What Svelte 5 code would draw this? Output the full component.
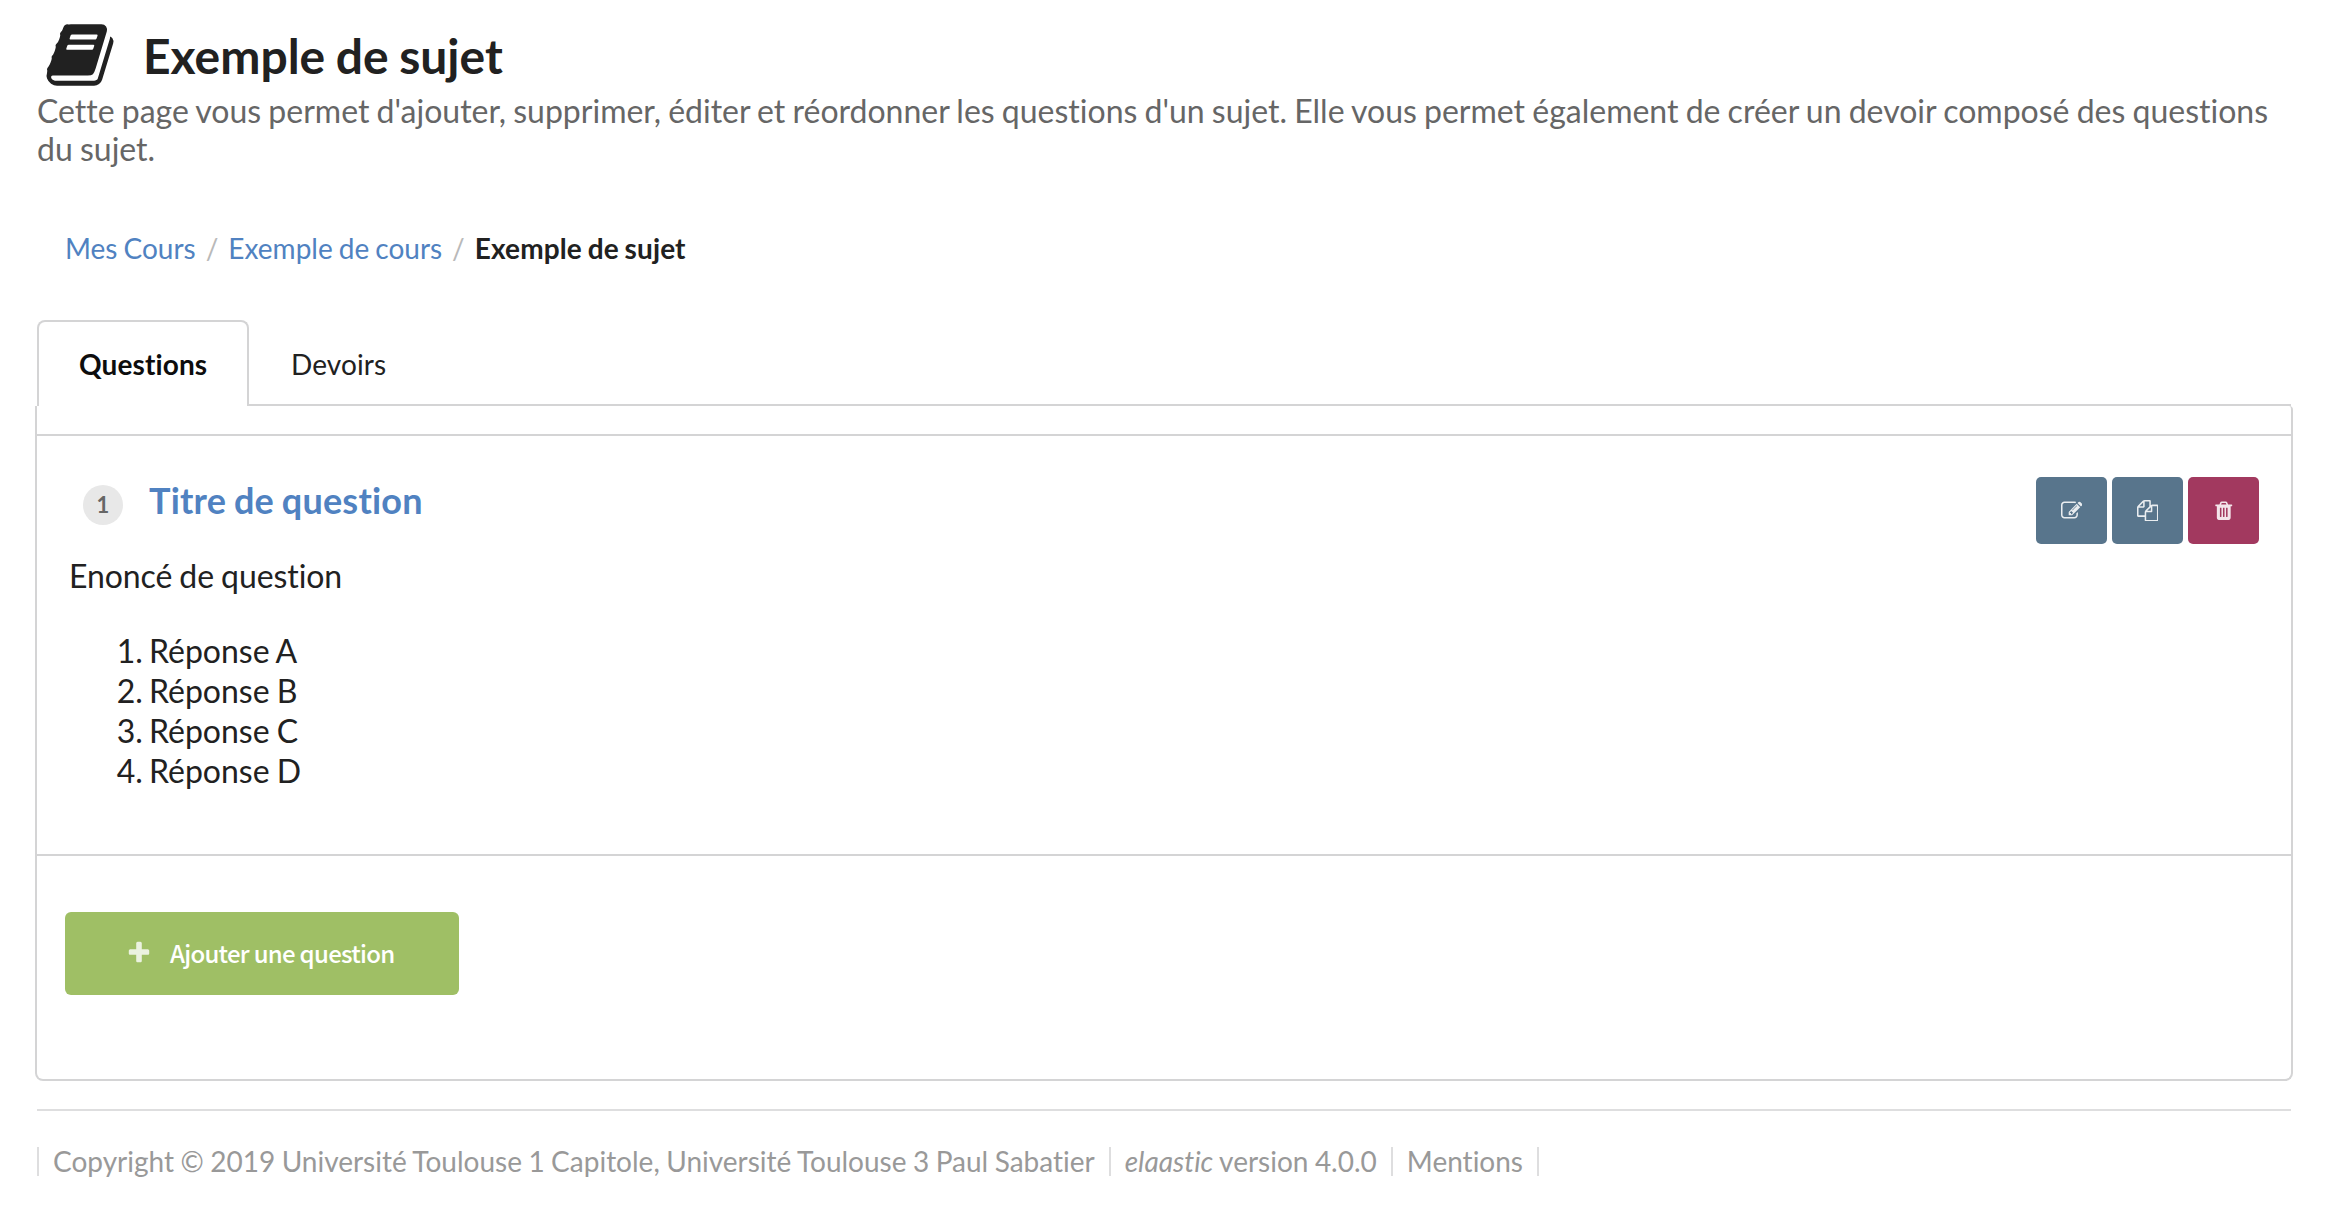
<script>
  const icons = {
    book: 'M1703 478q40 57 18 129l-275 906q-19 64-76.5 107.5t-122.5 43.5h-923q-77 0-148.5-53.5t-99.5-131.5q-24-67-2-127 0-4 3-27t4-37q1-8-3-21.5t-3-19.5q2-11 8-21t16.5-23.5 16.5-23.5q23-38 45-91.5t30-91.5q3-10 .5-30t-.5-28q3-11 17-28t17-23q21-36 42-92t25-90q1-9-2.5-32t.5-28q4-13 22-30.5t22-22.5q19-26 42.5-84.5t27.5-96.5q1-8-3-25.5t-2-26.5q2-8 9-18t18-23 17-21q8-12 16.5-30.5t15-35 16-36 19.5-32 26.5-23.5 36-11.5 47.5 5.5l-1 3q38-9 51-9h761q74 0 114 56t18 130l-274 906q-36 119-71.5 153.5t-128.5 34.5h-869q-27 0-38 15-11 16-1 43 24 70 144 70h923q29 0 56-15.5t35-41.5l300-987q7-22 5-57 38 15 59 43zm-1064 2q-4 13 2 22.5t20 9.5h608q13 0 25.5-9.5t16.5-22.5l21-64q4-13-2-22.5t-20-9.5h-608q-13 0-25.5 9.5t-16.5 22.5zm-83 256q-4 13 2 22.5t20 9.5h608q13 0 25.5-9.5t16.5-22.5l21-64q4-13-2-22.5t-20-9.5h-608q-13 0-25.5 9.5t-16.5 22.5z',
    edit: 'M888 1184l116-116-152-152-116 116v56h96v96h56zm440-720q-16-16-33 1l-350 350q-17 17-1 33t33-1l350-350q17-17 1-33zm80 594v190q0 119-84.5 203.5t-203.5 84.5h-832q-119 0-203.5-84.5t-84.5-203.5v-832q0-119 84.5-203.5t203.5-84.5h832q63 0 117 25 15 7 18 23 3 17-9 29l-49 49q-14 14-32 8-23-6-45-6h-832q-66 0-113 47t-47 113v832q0 66 47 113t113 47h832q66 0 113-47t47-113v-126q0-13 9-22l64-64q15-15 35-7t20 29zm-96-738l288 288-672 672h-288v-288zm444 132l-92 92-288-288 92-92q28-28 68-28t68 28l152 152q28 28 28 68t-28 68z',
    copy: 'M1696 384q40 0 68 28t28 68v1216q0 40-28 68t-68 28h-960q-40 0-68-28t-28-68v-288h-544q-40 0-68-28t-28-68v-672q0-40 20-88t48-76l408-408q28-28 76-48t88-20h416q40 0 68 28t28 68v328q68-40 128-40h416zm-544 213l-299 299h299v-299zm-640-384l-299 299h299v-299zm196 647l316-316v-416h-384v416q0 40-28 68t-68 28h-416v640h512v-256q0-40 20-88t48-76zm956 804v-1152h-384v416q0 40-28 68t-68 28h-416v640h896z',
    trash: 'M704 1376v-704q0-14-9-23t-23-9h-64q-14 0-23 9t-9 23v704q0 14 9 23t23 9h64q14 0 23-9t9-23zm256 0v-704q0-14-9-23t-23-9h-64q-14 0-23 9t-9 23v704q0 14 9 23t23 9h64q14 0 23-9t9-23zm256 0v-704q0-14-9-23t-23-9h-64q-14 0-23 9t-9 23v704q0 14 9 23t23 9h64q14 0 23-9t9-23zm-544-992h448l-48-117q-7-9-17-11h-317q-10 2-17 11zm928 32v64q0 14-9 23t-23 9h-96v948q0 83-47 143.5t-113 60.5h-832q-66 0-113-58.5t-47-141.5v-952h-96q-14 0-23-9t-9-23v-64q0-14 9-23t23-9h309l70-167q15-37 54-63t79-26h320q40 0 79 26t54 63l70 167h309q14 0 23 9t9 23z',
    plus: 'M1600 736v192q0 40-28 68t-68 28h-416v416q0 40-28 68t-68 28h-192q-40 0-68-28t-28-68v-416h-416q-40 0-68-28t-28-68v-192q0-40 28-68t68-28h416v-416q0-40 28-68t68-28h192q40 0 68 28t28 68v416h416q40 0 68 28t28 68z'
  };
  const answers = ['Réponse A', 'Réponse B', 'Réponse C', 'Réponse D'];
  const actions = [
    { icon: 'edit', label: 'Éditer', danger: false },
    { icon: 'copy', label: 'Dupliquer', danger: false },
    { icon: 'trash', label: 'Supprimer', danger: true }
  ];
</script>

{#snippet icon(name)}
  <svg class="icon {name}" viewBox="0 0 1792 1792" aria-hidden="true"><path d={icons[name]} /></svg>
{/snippet}

<div class="page">
  <header>
    <h1>{@render icon('book')}<span>Exemple de sujet</span></h1>
    <p class="lead">Cette page vous permet d'ajouter, supprimer, éditer et réordonner les questions d'un sujet. Elle vous permet également de créer un devoir composé des questions du sujet.</p>
  </header>

  <nav class="breadcrumb">
    <a href="#cours">Mes Cours</a><span class="slash">/</span><a href="#exemple">Exemple de cours</a><span class="slash">/</span><strong>Exemple de sujet</strong>
  </nav>

  <div class="tabs">
    <div class="tab active">Questions</div>
    <div class="tab">Devoirs</div>
  </div>

  <main class="panel">
    <section class="question">
      <div class="head">
        <span class="badge">1</span>
        <h2>Titre de question</h2>
        <div class="actions">
          {#each actions as action}
            <button class:danger={action.danger} aria-label={action.label}>{@render icon(action.icon)}</button>
          {/each}
        </div>
      </div>
      <p class="statement">Enoncé de question</p>
      <ol>
        {#each answers as answer}
          <li>{answer}</li>
        {/each}
      </ol>
    </section>
    <button class="add">{@render icon('plus')}<span>Ajouter une question</span></button>
  </main>

  <footer>
    <span>Copyright © 2019 Université Toulouse 1 Capitole, Université Toulouse 3 Paul Sabatier</span>
    <span><em>elaastic</em> version 4.0.0</span>
    <span>Mentions</span>
  </footer>
</div>

<style>
  :global(body) { background: #fff; }
  .page {
    box-sizing: border-box;
    width: 2334px;
    height: 1206px;
    overflow: hidden;
    padding: 19px 43px 0 37px;
    font: 28px/40px Lato, sans-serif;
    font-variant-ligatures: none;
    word-spacing: -0.04em;
    color: #212121;
  }
  h1, h2, p, ol { margin: 0; padding: 0; }
  .icon { display: block; fill: currentColor; flex: none; }
  .book { width: 72px; height: 72px; }
  h1 {
    display: flex;
    height: 73px;
    padding-left: 6.5px;
    gap: 27.5px;
    align-items: flex-start;
    font-size: 48px;
    line-height: 58px;
    font-weight: 700;
  }
  h1 span { margin-top: 8px; }
  .lead { font-size: 32px; line-height: 38.4px; color: #666; word-spacing: -1.02px; }
  .breadcrumb { display: flex; margin: 59px 0 52px 28px; height: 40px; }
  .breadcrumb strong { letter-spacing: .12px; }
  a { color: #5082c1; text-decoration: none; }
  .slash { color: #b9b9b9; margin: 0 10px; }
  .tabs { display: flex; height: 86px; }
  .tab {
    box-sizing: border-box;
    padding: 24px 42px 0;
    border-bottom: 2px solid #d4d4d5;
    letter-spacing: .12px;
  }
  .tab:last-child { flex: 1; }
  .active {
    width: 212px;
    padding: 22px 0 0 40px;
    font-weight: 700;
    color: #0d0d0d;
    border: 2px solid #d4d4d5;
    border-bottom: 0;
    border-radius: 8px 8px 0 0;
  }
  .panel {
    box-sizing: border-box;
    height: 675px;
    margin: 0 -2px;
    padding-top: 28px;
    border: 2px solid #d4d4d5;
    border-top: 0;
    border-radius: 0 4px 8px 8px;
  }
  .question {
    box-sizing: border-box;
    height: 422px;
    padding: 41px 32px 0 32px;
    border: solid #d4d4d5;
    border-width: 2px 0;
  }
  .head { display: flex; height: 67px; }
  .badge {
    width: 40px;
    height: 40px;
    margin: 8px 26px 0 14px;
    border-radius: 50%;
    background: #e8e8e8;
    color: #666;
    font-size: 22px;
    font-weight: 700;
    text-align: center;
  }
  h2 {
    margin-top: 1px;
    font-size: 36px;
    line-height: 44px;
    font-weight: 700;
    letter-spacing: .2px;
    color: #5082c1;
  }
  .actions { display: flex; gap: 5px; margin-left: auto; }
  button {
    border: 0;
    padding: 0;
    width: 71px;
    height: 67px;
    border-radius: 5px;
    display: flex;
    align-items: center;
    justify-content: center;
    background: #58758c;
    color: #fff;
  }
  button .icon { width: 21.5px; height: 21.5px; opacity: .87; }
  .danger { background: #a2395f; }
  .statement { font-size: 32px; margin-top: 12px; letter-spacing: -.07px; }
  ol { font-size: 32px; margin-top: 35px; padding-left: 80px; }
  li::marker { word-spacing: -2px; }
  .add {
    width: 394px;
    height: 83px;
    margin: 56px 0 0 28px;
    border-radius: 6px;
    background: #9fbf65;
    font: 500 24px/40px "Noto Sans CJK SC", sans-serif;
    letter-spacing: -0.72px;
    word-spacing: 0;
    justify-content: flex-start;
    padding-left: 61px;
    gap: 18px;
  }
  .add .icon { width: 26px; height: 26px; opacity: .8; }
  footer {
    display: flex;
    margin-top: 28px;
    padding-top: 36px;
    border-top: 2px solid #dededf;
    color: #999;
    line-height: 29px;
    word-spacing: -.7px;
  }
  footer span { padding: 0 14px; border-right: 2px solid #dededf; white-space: nowrap; }
  footer span:first-child { border-left: 2px solid #dededf; }
</style>
